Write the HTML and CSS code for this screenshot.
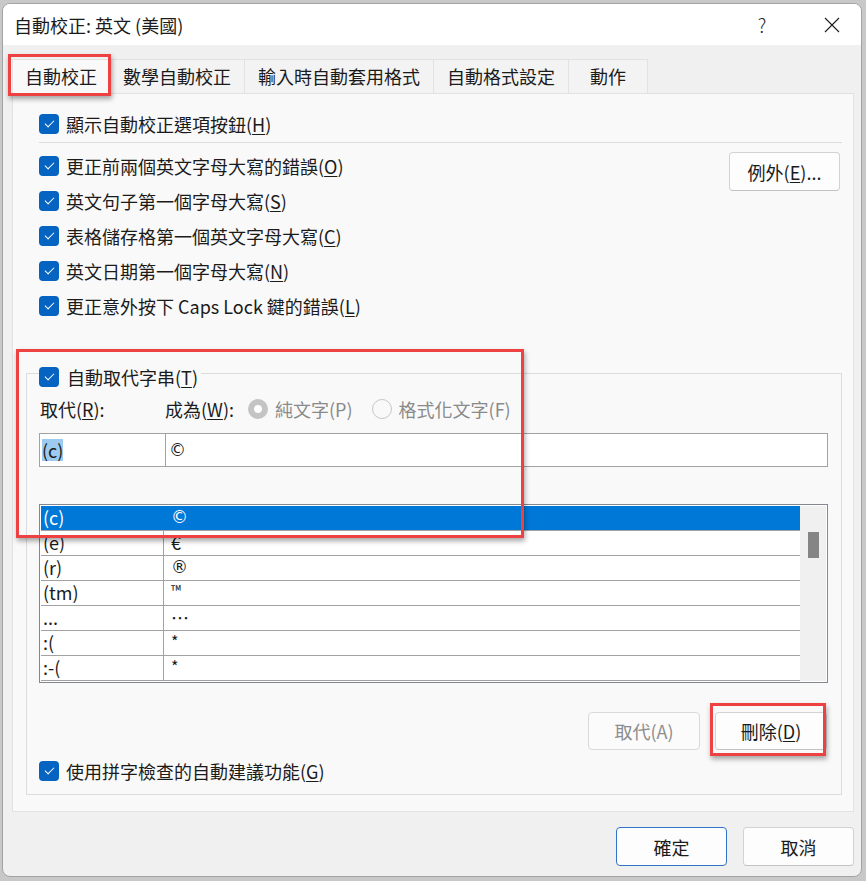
FILE: index.html
```html
<!DOCTYPE html>
<html lang="zh-Hant">
<head>
<meta charset="utf-8">
<title>自動校正: 英文 (美國)</title>
<link rel="stylesheet" href="styles.css">
</head>
<body>
<div class="dialog">
  <header class="titlebar">
    <span class="title">自動校正: 英文 (美國)</span>
    <span class="caption-btn help">?</span>
    <span class="caption-btn close">
      <svg width="16" height="16" viewBox="0 0 16 16"><path d="M1 1 L15 15 M15 1 L1 15" stroke="#1b1b1b" stroke-width="1.1" fill="none"/></svg>
    </span>
  </header>

  <div class="content">
    <nav class="tabs">
      <div class="tab active">自動校正</div>
      <div class="tab">數學自動校正</div>
      <div class="tab">輸入時自動套用格式</div>
      <div class="tab">自動格式設定</div>
      <div class="tab last">動作</div>
    </nav>

    <section class="panel">
      <div class="top">
        <label class="option"><span class="cb"></span><span>顯示自動校正選項按鈕(<u>H</u>)</span></label>
      </div>
      <div class="rule"></div>
      <div class="options">
        <div class="option-list">
          <label class="option"><span class="cb"></span><span>更正前兩個英文字母大寫的錯誤(<u>O</u>)</span></label>
          <label class="option"><span class="cb"></span><span>英文句子第一個字母大寫(<u>S</u>)</span></label>
          <label class="option"><span class="cb"></span><span>表格儲存格第一個英文字母大寫(<u>C</u>)</span></label>
          <label class="option"><span class="cb"></span><span>英文日期第一個字母大寫(<u>N</u>)</span></label>
          <label class="option"><span class="cb"></span><span>更正意外按下 Caps Lock 鍵的錯誤(<u>L</u>)</span></label>
        </div>
        <button class="btn except">例外(<u>E</u>)...</button>
      </div>

      <fieldset class="group">
        <legend class="legend"><span class="cb"></span><span>自動取代字串(<u>T</u>)</span></legend>

        <div class="labels">
          <span class="lbl-key">取代(<u>R</u>):</span>
          <span class="lbl-val">成為(<u>W</u>):</span>
          <span class="radio checked"></span><span class="dim">純文字(P)</span>
          <span class="radio second"></span><span class="dim">格式化文字(F)</span>
        </div>

        <div class="entry">
          <div class="cell key"><span class="selection">(c)</span></div>
          <div class="cell val"><span class="sym">©</span></div>
        </div>

        <div class="list">
          <div class="rows">
            <div class="row selected"><span class="k">(c)</span><span class="v sym">©</span></div>
            <div class="row"><span class="k">(e)</span><span class="v">€</span></div>
            <div class="row"><span class="k">(r)</span><span class="v sym">®</span></div>
            <div class="row"><span class="k">(tm)</span><span class="v tm">™</span></div>
            <div class="row"><span class="k">...</span><span class="v">…</span></div>
            <div class="row"><span class="k">:(</span><span class="v star">*</span></div>
            <div class="row"><span class="k">:-(</span><span class="v star">*</span></div>
          </div>
          <div class="scrollbar"><div class="thumb"></div></div>
        </div>

        <div class="actions">
          <button class="btn" disabled>取代(A)</button>
          <button class="btn">刪除(<u>D</u>)</button>
        </div>

        <label class="option"><span class="cb"></span><span>使用拼字檢查的自動建議功能(<u>G</u>)</span></label>
      </fieldset>
    </section>

    <footer class="footer">
      <button class="btn default">確定</button>
      <button class="btn">取消</button>
    </footer>
  </div>

  <!-- highlight frames drawn over the dialog -->
  <div class="callout callout-tab"></div>
  <div class="callout callout-replace"></div>
  <div class="callout callout-delete"></div>
</div>
</body>
</html>
```

FILE: styles.css
```css
* { box-sizing: border-box; }

html, body { margin: 0; }

body {
  background: #c8c8c8;
  font-family: "Noto Sans CJK TC", "Noto Sans", sans-serif;
  font-size: 18px;
  color: #1b1b1b;
}

u { text-decoration: underline; text-underline-offset: 2px; text-decoration-thickness: 1px; }

/* window frame */
.dialog {
  position: relative;
  margin: 3px 0 0 2px;
  width: 860px;
  height: 874px;
  background: #f0f0f0;
  border: 1px solid #a3a3a3;
  border-radius: 8px;
  overflow: hidden;
  display: flex;
  flex-direction: column;
}

.titlebar {
  height: 41px;
  flex: none;
  background: #fff;
  display: flex;
  align-items: center;
  padding: 0 6px 0 11px;
}

.title { font-size: 18px; line-height: 24px; }

.caption-btn {
  width: 46px;
  height: 41px;
  display: flex;
  align-items: center;
  justify-content: center;
}

.help { margin-left: auto; margin-right: 24px; font-size: 19px; font-weight: 300; }

/* body */
.content { padding: 14px 7px 0 9px; flex: 1; }

.tabs { display: flex; height: 34px; }

.tab {
  padding: 0 13px;
  line-height: 32px;
  border: 1px solid #e2e2e2;
  border-right: none;
  border-bottom: none;
  background: #f3f3f3;
  white-space: nowrap;
}

.tab.last { border-right: 1px solid #e2e2e2; min-width: 80px; text-align: center; }

.tab.active {
  position: relative;
  z-index: 1;
  background: #f9f9f9;
  height: 35px;
  padding: 0 12px;
}

.panel {
  height: 719px;
  background: #f9f9f9;
  border: 1px solid #e2e2e2;
  padding: 12px 11px 0 13px;
}

.top { padding-left: 13px; }

.option {
  display: flex;
  align-items: center;
  gap: 7px;
  height: 35px;
  line-height: 24px;
  white-space: nowrap;
}

.cb {
  position: relative;
  flex: none;
  width: 20px;
  height: 20px;
  border-radius: 4px;
  background: #0563c1;
}

.cb::after {
  content: "";
  position: absolute;
  left: 6px;
  top: 6px;
  width: 8px;
  height: 4px;
  border-left: 1.2px solid #fff;
  border-bottom: 1.2px solid #fff;
  transform: rotate(-45deg);
}

.rule { margin: 1px 0 0 13px; height: 1px; background: #dcdcdc; }

.options { display: flex; margin-top: 5px; padding-left: 13px; }

.option-list { display: flex; flex-direction: column; }

.btn {
  font-family: inherit;
  font-size: 18px;
  color: #1b1b1b;
  background: #fdfdfd;
  border: 1px solid #d3d3d3;
  border-bottom-color: #c2c2c2;
  border-radius: 4px;
  width: 112px;
  height: 38px;
  padding: 0;
  line-height: 24px;
}

.btn:disabled { color: #8d8d8d; background: #fbfbfb; border-color: #dadada; }

.except { margin-left: auto; margin-top: 4px; margin-right: 2px; width: 111px; height: 39px; }

/* auto-replace group */
.group {
  margin: 36px 0 0 0;
  padding: 0 13px 6px 12px;
  border: 1px solid #dcdcdc;
  min-width: 0;
}

.legend {
  display: flex;
  align-items: center;
  gap: 8px;
  height: 28px;
  padding: 8px 3px 0 0;
  line-height: 20px;
  white-space: nowrap;
}

.labels {
  display: flex;
  align-items: center;
  height: 24px;
  margin-top: 10px;
  line-height: 24px;
  white-space: nowrap;
}

.lbl-key { width: 126px; padding-left: 1px; }
.lbl-val { margin-right: 14px; }

.radio {
  flex: none;
  width: 20px;
  height: 20px;
  border-radius: 50%;
  border: 1px solid #c6c6c6;
  background: #f9f9f9;
  margin-right: 7px;
}

.radio.checked {
  border: none;
  background: radial-gradient(circle, #fff 0 3.5px, #c4c4c4 4.5px);
}

.radio.second { margin-left: 19px; }

.dim { color: #8a8a8a; }

.entry {
  display: flex;
  height: 34px;
  margin-top: 12px;
  border: 1px solid #a2a2a2;
  background: #fff;
}

.cell { display: flex; align-items: center; line-height: 22px; }
.key { width: 126px; border-right: 1px solid #a2a2a2; padding-left: 2px; }
.val { flex: 1; padding-left: 3px; }

.selection { background: #9dcbf0; }

/* circled symbols need a font with full-size glyphs */
.sym { font-family: "DejaVu Sans", sans-serif; font-size: 17px; }

.list {
  display: flex;
  height: 179px;
  margin-top: 37px;
  border: 1px solid #828790;
  padding: 1px;
  background: #fff;
}

.rows { flex: 1; }

.row {
  display: flex;
  height: 25px;
  border-bottom: 1px solid #a2a2a2;
  line-height: 22px;
}

.row .k { width: 123px; border-right: 1px solid #a2a2a2; padding-left: 2px; }
.row .v { padding-left: 7px; }
.row .tm { font-size: 14px; line-height: 18px; }
.row .star { font-size: 16px; line-height: 20px; }

.row.selected { background: #0078d7; color: #fff; }
.row.selected .k { border-right-color: #0078d7; }

.scrollbar { width: 26px; background: #f0f0f0; padding: 26px 0 0 8px; }
.thumb { width: 11px; height: 26px; background: #858585; }

.actions {
  display: flex;
  justify-content: flex-end;
  gap: 15px;
  margin-top: 29px;
  padding-right: 1px;
}

.actions + .option { margin-top: 3px; }

/* dialog buttons */
.footer {
  display: flex;
  justify-content: flex-end;
  gap: 16px;
  margin-top: 15px;
}

.footer .btn { width: 111px; height: 39px; }
.footer .default { border-color: #3174c6; }

/* red highlight frames */
.callout {
  position: absolute;
  border: 3px solid #ee4242;
  box-shadow: 1px 3px 5px rgba(0, 0, 0, 0.35);
  pointer-events: none;
  z-index: 5;
}

.callout-tab { left: 5px; top: 50px; width: 103px; height: 42px; }
.callout-replace { left: 13px; top: 345px; width: 508px; height: 189px; }
.callout-delete { left: 707px; top: 699px; width: 116px; height: 53px; }
```
